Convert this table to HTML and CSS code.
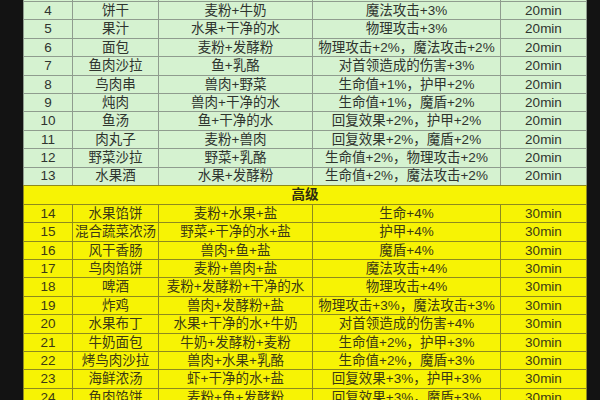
FILE: index.html
```html
<!DOCTYPE html>
<html lang="zh">
<head>
<meta charset="utf-8">
<title>料理表</title>
<link rel="stylesheet" href="styles.css">
</head>
<body>
<div class="sheet">
  <div class="grid green">
    <div></div><div></div><div></div><div></div><div></div>
    <div>4</div><div>饼干</div><div>麦粉+牛奶</div><div>魔法攻击+3%</div><div>20min</div>
    <div>5</div><div>果汁</div><div>水果+干净的水</div><div>物理攻击+3%</div><div>20min</div>
    <div>6</div><div>面包</div><div>麦粉+发酵粉</div><div>物理攻击+2%，魔法攻击+2%</div><div>20min</div>
    <div>7</div><div>鱼肉沙拉</div><div>鱼+乳酪</div><div>对首领造成的伤害+3%</div><div>20min</div>
    <div>8</div><div>鸟肉串</div><div>兽肉+野菜</div><div>生命值+1%，护甲+2%</div><div>20min</div>
    <div>9</div><div>炖肉</div><div>兽肉+干净的水</div><div>生命值+1%，魔盾+2%</div><div>20min</div>
    <div>10</div><div>鱼汤</div><div>鱼+干净的水</div><div>回复效果+2%，护甲+2%</div><div>20min</div>
    <div>11</div><div>肉丸子</div><div>麦粉+兽肉</div><div>回复效果+2%，魔盾+2%</div><div>20min</div>
    <div>12</div><div>野菜沙拉</div><div>野菜+乳酪</div><div>生命值+2%，物理攻击+2%</div><div>20min</div>
    <div>13</div><div>水果酒</div><div>水果+发酵粉</div><div>生命值+2%，魔法攻击+2%</div><div>20min</div>
  </div>
  <div class="grid yellow">
    <div class="section">高级</div>
    <div>14</div><div>水果馅饼</div><div>麦粉+水果+盐</div><div>生命+4%</div><div>30min</div>
    <div>15</div><div>混合蔬菜浓汤</div><div>野菜+干净的水+盐</div><div>护甲+4%</div><div>30min</div>
    <div>16</div><div>风干香肠</div><div>兽肉+鱼+盐</div><div>魔盾+4%</div><div>30min</div>
    <div>17</div><div>鸟肉馅饼</div><div>麦粉+兽肉+盐</div><div>魔法攻击+4%</div><div>30min</div>
    <div>18</div><div>啤酒</div><div>麦粉+发酵粉+干净的水</div><div>物理攻击+4%</div><div>30min</div>
    <div>19</div><div>炸鸡</div><div>兽肉+发酵粉+盐</div><div>物理攻击+3%，魔法攻击+3%</div><div>30min</div>
    <div>20</div><div>水果布丁</div><div>水果+干净的水+牛奶</div><div>对首领造成的伤害+4%</div><div>30min</div>
    <div>21</div><div>牛奶面包</div><div>牛奶+发酵粉+麦粉</div><div>生命值+2%，护甲+3%</div><div>30min</div>
    <div>22</div><div>烤鸟肉沙拉</div><div>兽肉+水果+乳酪</div><div>生命值+2%，魔盾+3%</div><div>30min</div>
    <div>23</div><div>海鲜浓汤</div><div>虾+干净的水+盐</div><div>回复效果+3%，护甲+3%</div><div>30min</div>
    <div>24</div><div>鱼肉馅饼</div><div>麦粉+鱼+发酵粉</div><div>回复效果+3%，魔盾+3%</div><div>30min</div>
  </div>
</div>
</body>
</html>
```
FILE: styles.css
```css
html, body {
  margin: 0;
  padding: 0;
  width: 600px;
  height: 400px;
  overflow: hidden;
  background: #131313;
}

body {
  font-family: "Liberation Sans", "Noto Sans CJK SC", sans-serif;
  font-size: 13.5px;
}

.sheet {
  margin-left: 23px;
  margin-top: -16.4px;
  width: 564px;
}

.grid {
  display: grid;
  grid-template-columns: 48px 85px 153px 187px 85px;
  grid-auto-rows: 17.4px;
  gap: 1px;
  padding: 0 1px;
}

.grid > div {
  display: flex;
  align-items: center;
  justify-content: center;
  white-space: nowrap;
  line-height: 1;
}

.green {
  background: #8f9c8e;
}

.green > div {
  background: #d5f2d0;
  color: #2f342f;
}

.yellow {
  background: #8e8a1e;
  padding-top: 1px;
  grid-template-rows: 18px;
}

.yellow > div {
  background: #f7f304;
  color: #3c3a14;
}

.yellow > .section {
  grid-column: 1 / -1;
  font-weight: bold;
  color: #2e2c10;
}
```
